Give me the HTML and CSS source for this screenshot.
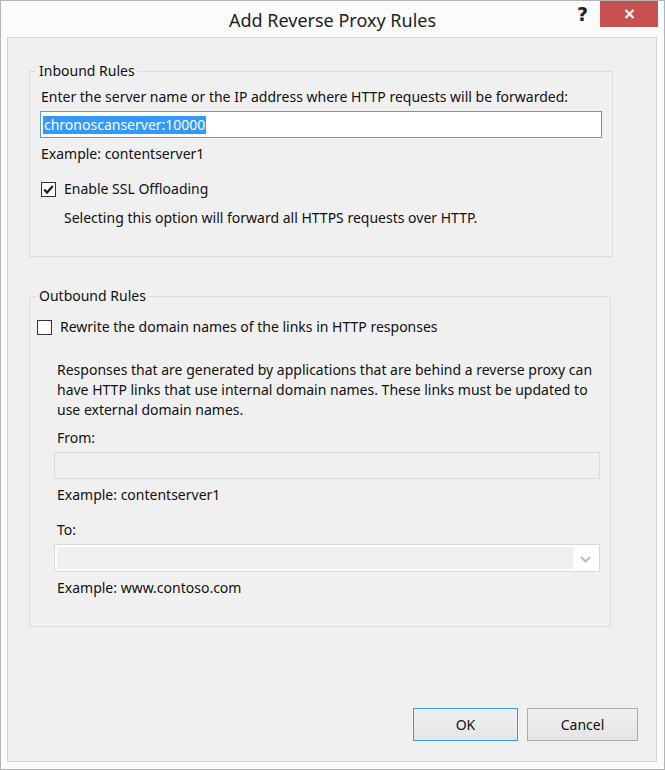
FILE: index.html
```html
<!DOCTYPE html>
<html>
<head>
<meta charset="utf-8">
<link rel="stylesheet" href="styles.css">
</head>
<body>
<div class="window">
  <div class="titlebar">
    <div></div>
    <div class="title">Add Reverse Proxy Rules</div>
    <div class="controls">
      <span class="help">?</span>
      <span class="close"><svg width="11" height="10" viewBox="0 0 11 10"><path d="M1.5 1 L9.5 9 M9.5 1 L1.5 9" stroke="#fff" stroke-width="2.2" fill="none"/></svg></span>
    </div>
  </div>
  <div class="client">
    <fieldset class="group inbound">
      <legend>Inbound Rules</legend>
      <div class="body">
        <div class="line lbl-first">Enter the server name or the IP address where HTTP requests will be forwarded:</div>
        <div class="textbox focused"><span class="sel">chronoscanserver:10000</span></div>
        <div class="line example">Example: contentserver1</div>
        <div class="check-row ssl">
          <span class="checkbox"><svg width="13" height="13" viewBox="0 0 13 13"><path d="M2.2 6.6 L5 9.6 L10.8 3" stroke="#1e1e1e" stroke-width="2.2" fill="none"/></svg></span>
          <span class="line">Enable SSL Offloading</span>
        </div>
        <div class="line note">Selecting this option will forward all HTTPS requests over HTTP.</div>
      </div>
    </fieldset>
    <fieldset class="group outbound">
      <legend>Outbound Rules</legend>
      <div class="body">
        <div class="check-row">
          <span class="checkbox"></span>
          <span class="line">Rewrite the domain names of the links in HTTP responses</span>
        </div>
        <div class="indent">
          <div class="line para">Responses that are generated by applications that are behind a reverse proxy can have HTTP links that use internal domain names. These links must be updated to use external domain names.</div>
          <div class="line field-lbl">From:</div>
          <div class="textbox disabled"></div>
          <div class="line example">Example: contentserver1</div>
          <div class="line field-lbl to">To:</div>
          <div class="combo">
            <div class="combo-field"></div>
            <div class="combo-arrow"><svg width="11" height="7" viewBox="0 0 11 7"><path d="M1 1 L5.5 5.5 L10 1" stroke="#bdbdbd" stroke-width="2" fill="none"/></svg></div>
          </div>
          <div class="line example">Example: www.contoso.com</div>
        </div>
      </div>
    </fieldset>
    <div class="buttons">
      <button class="btn ok">OK</button>
      <button class="btn cancel">Cancel</button>
    </div>
  </div>
</div>
</body>
</html>
```
FILE: styles.css
```css
html, body {
  margin: 0;
  padding: 0;
  background: #fbfbfb;
}
.window {
  width: 665px;
  height: 770px;
  box-sizing: border-box;
  border: 1px solid #b4b4b4;
  background: #fbfbfb;
  display: flex;
  flex-direction: column;
  font-family: "Noto Sans", "Open Sans", sans-serif;
  font-size: 14px;
  color: #111;
}
.titlebar {
  height: 36px;
  display: grid;
  grid-template-columns: 1fr auto 1fr;
  flex: none;
}
.title {
  font-size: 18px;
  color: #222;
  line-height: 36px;
  padding-top: 1px;
}
.controls {
  display: flex;
  justify-content: flex-end;
  align-items: flex-start;
}
.help {
  font-family: "DejaVu Sans", sans-serif;
  font-weight: bold;
  font-size: 19px;
  line-height: 27px;
  height: 27px;
  color: #222;
  margin-right: 12px;
}
.close {
  width: 58px;
  height: 26px;
  background: #c75050;
  margin-right: 6px;
  display: flex;
  align-items: center;
  justify-content: center;
}
.client {
  flex: 1;
  margin: 0 7px 7px 6px;
  border: 1px solid #d4d4d4;
  background: #f0f0f0;
  display: flex;
  flex-direction: column;
}
.group {
  margin: 0 0 0 21px;
  padding: 0;
  border: 1px solid #dcdcdc;
  min-width: 0;
  box-sizing: border-box;
}
.group legend {
  margin-left: 6px;
  padding: 0 3px;
  line-height: 18px;
  color: #111;
}
.inbound {
  margin-top: 24px;
  width: 584px;
}
.outbound {
  margin-top: 30px;
  width: 582px;
}
.line {
  line-height: 20px;
  display: block;
}
.inbound .body {
  padding: 7px 0 28px 11px;
}
.textbox {
  height: 27px;
  box-sizing: border-box;
  border: 1px solid #d9d9d9;
  background: #efefef;
}
.textbox.focused {
  margin-top: 4px;
  margin-left: -1px;
  width: 562px;
  border-color: #569de5;
  background: #fff;
  padding: 3px 0 0 2px;
}
.sel {
  display: inline-block;
  background: #3399ff;
  color: #fff;
  line-height: 18px;
  padding: 0 1px;
}
.example {
  margin-top: 6px;
}
.check-row {
  display: flex;
  align-items: center;
  height: 20px;
}
.ssl {
  margin-top: 15px;
}
.checkbox {
  width: 15px;
  height: 15px;
  box-sizing: border-box;
  border: 1px solid #333;
  background: #fff;
  margin-right: 8px;
  display: flex;
  align-items: center;
  justify-content: center;
  flex: none;
}
.note {
  margin-top: 9px;
  margin-left: 23px;
}
.outbound .body {
  padding: 12px 0 28px 7px;
}
.indent {
  padding-left: 20px;
}
.para {
  margin-top: 23px;
  width: 545px;
}
.field-lbl {
  margin-top: 8px;
}
.field-lbl.to {
  margin-top: 15px;
}
.textbox.disabled {
  margin-top: 4px;
  margin-left: -3px;
  width: 546px;
}
.combo {
  margin-top: 4px;
  margin-left: -3px;
  width: 546px;
  height: 28px;
  box-sizing: border-box;
  border: 1px solid #d9d9d9;
  background: #fff;
  padding: 2px;
  display: flex;
}
.combo-field {
  flex: 1;
  background: #efefef;
}
.combo-arrow {
  width: 24px;
  display: flex;
  align-items: center;
  justify-content: center;
  padding-top: 2px;
}
.buttons {
  margin-top: auto;
  margin-bottom: 20px;
  padding-right: 18px;
  display: flex;
  justify-content: flex-end;
  gap: 9px;
}
.btn {
  height: 33px;
  box-sizing: border-box;
  border: 1px solid #acacac;
  background: linear-gradient(#f0f0f0, #e5e5e5);
  font-family: "Noto Sans", "Open Sans", sans-serif;
  font-size: 14px;
  color: #111;
  padding: 0;
}
.btn.ok {
  width: 105px;
  border-color: #3c9ae8;
}
.btn.cancel {
  width: 111px;
}
```
